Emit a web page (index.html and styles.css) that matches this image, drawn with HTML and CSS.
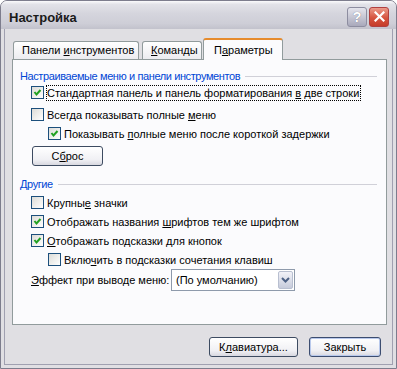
FILE: index.html
```html
<!DOCTYPE html>
<html lang="ru">
  <head>
    <meta charset="UTF-8" />
    <title>Настройка</title>
    <link rel="stylesheet" href="styles.css">
  </head>
  <body>
    <div class="window">
      <div class="titlebar">
        <span class="title">Настройка</span>
        <div class="caption-buttons">
          <span class="cap-btn help">?</span>
          <span class="cap-btn close">
            <svg width="11" height="11" viewBox="0 0 11 11">
              <path d="M1.5 1.5 L9.5 9.5 M9.5 1.5 L1.5 9.5" stroke="#fff" stroke-width="2.2" stroke-linecap="square" />
            </svg>
          </span>
        </div>
      </div>
      <div class="frame">
        <div class="tabs">
          <div class="tab tab-toolbars">Панели <u>и</u>нструментов</div>
          <div class="tab tab-commands"><u>К</u>оманды</div>
          <div class="tab tab-options active">П<u>а</u>раметры</div>
        </div>
        <div class="panel">
          <div class="group-title">
            <span>Настраиваемые меню и панели инструментов</span>
            <div class="rule"></div>
          </div>
          <div class="option first">
            <span class="box checked"><svg width="9" height="9" viewBox="0 0 9 9"><path d="M1.5 4 L3.5 6.5 L7.5 2" fill="none" stroke="#21a121" stroke-width="2" /></svg></span>
            <span class="label focus">Стандартная панель и панель форматирования <u>в</u> две строки</span>
          </div>
          <div class="option">
            <span class="box"></span>
            <span class="label">Всегда показывать полные <u>м</u>еню</span>
          </div>
          <div class="option sub">
            <span class="box checked"><svg width="9" height="9" viewBox="0 0 9 9"><path d="M1.5 4 L3.5 6.5 L7.5 2" fill="none" stroke="#21a121" stroke-width="2" /></svg></span>
            <span class="label">Показывать <u>п</u>олные меню после короткой задержки</span>
          </div>
          <div class="reset-row">
            <button class="btn reset">С<u>б</u>рос</button>
          </div>

          <div class="group-title other">
            <span>Другие</span>
            <div class="rule"></div>
          </div>
          <div class="option">
            <span class="box"></span>
            <span class="label">Крупны<u>е</u> значки</span>
          </div>
          <div class="option">
            <span class="box checked"><svg width="9" height="9" viewBox="0 0 9 9"><path d="M1.5 4 L3.5 6.5 L7.5 2" fill="none" stroke="#21a121" stroke-width="2" /></svg></span>
            <span class="label">Отображать названия <u>ш</u>рифтов тем же шрифтом</span>
          </div>
          <div class="option">
            <span class="box checked"><svg width="9" height="9" viewBox="0 0 9 9"><path d="M1.5 4 L3.5 6.5 L7.5 2" fill="none" stroke="#21a121" stroke-width="2" /></svg></span>
            <span class="label"><u>О</u>тображать подсказки для кнопок</span>
          </div>
          <div class="option sub">
            <span class="box"></span>
            <span class="label">Вклю<u>ч</u>ить в подсказки сочетания клавиш</span>
          </div>
          <div class="effect-row">
            <span class="label"><u>Э</u>ффект при выводе меню:</span>
            <div class="combo">
              <span class="combo-value">(По умолчанию)</span>
              <span class="combo-btn">
                <svg width="9" height="6" viewBox="0 0 9 6"><path d="M1 1 L4.5 4.5 L8 1" fill="none" stroke="#4d6185" stroke-width="2" /></svg>
              </span>
            </div>
          </div>
        </div>
        <div class="footer">
          <button class="btn keyboard">К<u>л</u>авиатура...</button>
          <button class="btn close-btn">Закрыть</button>
        </div>
      </div>
    </div>
  </body>
</html>
```

FILE: styles.css
```css
body {
  margin: 0;
  background-color: #ffffff;
  font-family: "Liberation Sans", Arial, sans-serif;
  font-size: 11px;
  color: #000;
}
u {
  text-decoration: underline;
  text-underline-offset: 1px;
}
.window {
  width: 397px;
  height: 369px;
  box-sizing: border-box;
  border: 1px solid #7d7d8d;
  border-radius: 7px 7px 0 0;
  background-color: #e0dfe3;
  display: flex;
  flex-direction: column;
}
.titlebar {
  height: 28px;
  flex: none;
  display: flex;
  align-items: center;
  justify-content: space-between;
  padding: 0 7px 0 8px;
  border-radius: 6px 6px 0 0;
  background: linear-gradient(to bottom, #fbfbfc 0%, #e2e2e8 12%, #d5d5dd 45%, #ceced7 80%, #c2c2cc 100%);
}
.title {
  font-size: 13px;
  font-weight: bold;
  color: #1a1a1a;
  margin-top: 4px;
}
.caption-buttons {
  display: flex;
  gap: 2px;
  margin-top: 3px;
}
.cap-btn {
  width: 20px;
  height: 20px;
  box-sizing: border-box;
  border-radius: 3px;
  display: flex;
  align-items: center;
  justify-content: center;
}
.help {
  border: 1px solid #8d8da0;
  background: linear-gradient(to bottom, #e4e4ec, #a9a9bb);
  color: #fff;
  font-weight: bold;
  font-size: 14px;
  text-shadow: 0 0 1px #6a6a80;
}
.close {
  border: 1px solid #b04040;
  background: linear-gradient(to bottom, #eb9b8b, #d6543f 55%, #c53c2a);
}
.frame {
  flex: 1;
  margin: 0 3px 3px;
  border: 1px solid #a0a0b0;
  border-top: none;
  padding: 9px 5px 0 7px;
  display: flex;
  flex-direction: column;
}
.tabs {
  height: 21px;
  display: flex;
  align-items: flex-end;
}
.tab {
  height: 18px;
  box-sizing: border-box;
  border: 1px solid #919b9c;
  border-bottom: none;
  border-radius: 3px 3px 0 0;
  background: linear-gradient(to bottom, #ffffff, #ececf0);
  padding-left: 8px;
  line-height: 17px;
  white-space: nowrap;
}
.tab-toolbars {
  width: 126px;
  margin-left: 1px;
}
.tab-commands {
  width: 60px;
  margin-left: 3px;
}
.tab.active {
  width: 80px;
  height: 22px;
  margin-left: 1px;
  margin-bottom: -1px;
  padding-left: 10px;
  line-height: 21px;
  background: #fbfbfd;
  border-top: 2px solid #e68b2c;
  position: relative;
  z-index: 1;
}
.panel {
  height: 266px;
  box-sizing: border-box;
  border: 1px solid #919b9c;
  background-color: #fbfbfd;
  padding: 9px 9px 0 7px;
}
.group-title {
  display: flex;
  align-items: center;
  height: 14px;
  color: #0046d5;
}
.group-title span {
  letter-spacing: -0.4px;
}
.group-title .rule {
  flex: 1;
  height: 1px;
  margin-left: 5px;
  background-color: #d0d0d8;
}
.option {
  height: 19px;
  display: flex;
  align-items: center;
  padding-left: 11px;
}
.option.first {
  margin-bottom: 3px;
}
.option.sub {
  padding-left: 28px;
}
.box {
  width: 13px;
  height: 13px;
  flex: none;
  box-sizing: border-box;
  border: 1px solid #1c4f7c;
  background: linear-gradient(135deg, #dcdcd7, #ffffff);
  display: flex;
  align-items: center;
  justify-content: center;
}
.label {
  margin-left: 3px;
  white-space: nowrap;
}
.label.focus {
  outline: 1px dotted #000;
  outline-offset: 0;
  padding: 1px 1px 1px 0;
}
.btn {
  font-family: inherit;
  font-size: 11px;
  color: #000;
  height: 20px;
  box-sizing: border-box;
  border: 1px solid #3d4b61;
  border-radius: 3px;
  background: linear-gradient(to bottom, #ffffff, #f0f0f4 70%, #d8d8e0);
  padding: 0;
}
.reset-row {
  padding: 3px 0 0 12px;
}
.reset {
  width: 71px;
}
.group-title.other {
  margin-top: 11px;
}
.group-title.other + .option {
  margin-top: 2px;
}
.effect-row {
  display: flex;
  align-items: center;
  padding-left: 11px;
  margin-top: 0;
}
.effect-row .label {
  margin-left: 0;
  width: 140px;
}
.combo {
  width: 124px;
  height: 22px;
  box-sizing: border-box;
  border: 1px solid #8e9aab;
  background-color: #ffffff;
  display: flex;
  align-items: center;
  justify-content: space-between;
  padding: 0 1px 0 4px;
}
.combo-btn {
  width: 15px;
  height: 18px;
  box-sizing: border-box;
  border: 1px solid #b8bfd0;
  border-radius: 2px;
  background: linear-gradient(to bottom, #f2f2f8, #c6cbdb);
  display: flex;
  align-items: center;
  justify-content: center;
}
.footer {
  display: flex;
  justify-content: flex-end;
  gap: 11px;
  margin-top: 12px;
  padding-right: 6px;
}
.keyboard {
  width: 89px;
}
.close-btn {
  width: 72px;
  border-color: #3c4d70;
  box-shadow: inset 0 0 0 1px #b9c9ec;
}
```
